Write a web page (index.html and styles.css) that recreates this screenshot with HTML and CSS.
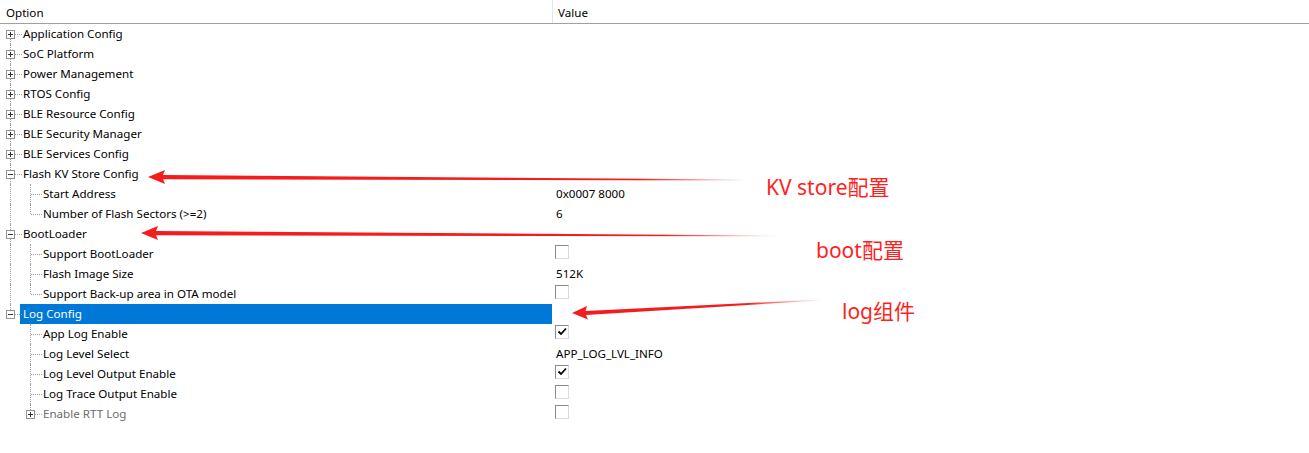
FILE: index.html
```html
<html><head>
<meta name="viewport" content="width=device-width, initial-scale=1">
<link rel="stylesheet" href="styles.css"></head><body>

<div class="page">
  <div class="head">
    <div class="hcol c-opt">Option</div>
    <div class="hcol c-val">Value</div>
  </div>

  <div class="tree">
    <div class="row"><div class="opt"><span class="g vb h"><i class="box plus"></i></span><span class="lbl">Application Config</span></div><div class="val"></div></div>
    <div class="row"><div class="opt"><span class="g v h"><i class="box plus"></i></span><span class="lbl">SoC Platform</span></div><div class="val"></div></div>
    <div class="row"><div class="opt"><span class="g v h"><i class="box plus"></i></span><span class="lbl">Power Management</span></div><div class="val"></div></div>
    <div class="row"><div class="opt"><span class="g v h"><i class="box plus"></i></span><span class="lbl">RTOS Config</span></div><div class="val"></div></div>
    <div class="row"><div class="opt"><span class="g v h"><i class="box plus"></i></span><span class="lbl">BLE Resource Config</span></div><div class="val"></div></div>
    <div class="row"><div class="opt"><span class="g v h"><i class="box plus"></i></span><span class="lbl">BLE Security Manager</span></div><div class="val"></div></div>
    <div class="row"><div class="opt"><span class="g v h"><i class="box plus"></i></span><span class="lbl">BLE Services Config</span></div><div class="val"></div></div>

    <div class="row"><div class="opt"><span class="g v h"><i class="box"></i></span><span class="lbl">Flash KV Store Config</span></div><div class="val"></div></div>
    <div class="row"><div class="opt"><span class="g v"></span><span class="g v h"></span><span class="lbl">Start Address</span></div><div class="val">0x0007 8000</div></div>
    <div class="row"><div class="opt"><span class="g v"></span><span class="g vt h"></span><span class="lbl">Number of Flash Sectors (&gt;=2)</span></div><div class="val">6</div></div>

    <div class="row"><div class="opt"><span class="g v h"><i class="box"></i></span><span class="lbl">BootLoader</span></div><div class="val"></div></div>
    <div class="row"><div class="opt"><span class="g v"></span><span class="g v h"></span><span class="lbl">Support BootLoader</span></div><div class="val"><span class="chk"></span></div></div>
    <div class="row"><div class="opt"><span class="g v"></span><span class="g v h"></span><span class="lbl">Flash Image Size</span></div><div class="val">512K</div></div>
    <div class="row"><div class="opt"><span class="g v"></span><span class="g vt h"></span><span class="lbl">Support Back-up area in OTA model</span></div><div class="val"><span class="chk"></span></div></div>

    <div class="row sel"><div class="opt"><span class="g vt h"><i class="box"></i></span><span class="lbl">Log Config</span></div><div class="val"></div></div>
    <div class="row"><div class="opt"><span class="g"></span><span class="g v h"></span><span class="lbl">App Log Enable</span></div><div class="val"><span class="chk on"><svg width="12" height="12" viewBox="0 0 12 12"><path d="M2.5 5.5 L5 8 L10 2.5" fill="none" stroke="#000" stroke-width="1.8"/></svg></span></div></div>
    <div class="row"><div class="opt"><span class="g"></span><span class="g v h"></span><span class="lbl">Log Level Select</span></div><div class="val">APP_LOG_LVL_INFO</div></div>
    <div class="row"><div class="opt"><span class="g"></span><span class="g v h"></span><span class="lbl">Log Level Output Enable</span></div><div class="val"><span class="chk on"><svg width="12" height="12" viewBox="0 0 12 12"><path d="M2.5 5.5 L5 8 L10 2.5" fill="none" stroke="#000" stroke-width="1.8"/></svg></span></div></div>
    <div class="row"><div class="opt"><span class="g"></span><span class="g v h"></span><span class="lbl">Log Trace Output Enable</span></div><div class="val"><span class="chk"></span></div></div>
    <div class="row off"><div class="opt"><span class="g"></span><span class="g vt h"><i class="box plus"></i></span><span class="lbl">Enable RTT Log</span></div><div class="val"><span class="chk"></span></div></div>
  </div>

  <!-- annotations -->
  <svg class="marks" width="1309" height="453" viewBox="0 0 1309 453">
    <defs>
      <linearGradient id="fade1" gradientUnits="userSpaceOnUse" x1="148" y1="0" x2="748" y2="0">
        <stop offset="0" stop-color="#f41c1c"/>
        <stop offset="0.82" stop-color="#f41c1c"/>
        <stop offset="1" stop-color="#f41c1c" stop-opacity="0"/>
      </linearGradient>
      <linearGradient id="fade2" gradientUnits="userSpaceOnUse" x1="141" y1="0" x2="780" y2="0">
        <stop offset="0" stop-color="#f41c1c"/>
        <stop offset="0.82" stop-color="#f41c1c"/>
        <stop offset="1" stop-color="#f41c1c" stop-opacity="0"/>
      </linearGradient>
      <linearGradient id="fade3" gradientUnits="userSpaceOnUse" x1="572" y1="0" x2="820" y2="0">
        <stop offset="0" stop-color="#f41c1c"/>
        <stop offset="0.7" stop-color="#f41c1c"/>
        <stop offset="1" stop-color="#f41c1c" stop-opacity="0"/>
      </linearGradient>
    </defs>
    <polygon fill="url(#fade1)" points="148,177 165,170 163,175 748,179.6 748,180.4 163,179.2 165,184"/>
    <polygon fill="url(#fade2)" points="141,233 158,226 156,231 780,235.6 780,236.4 156,235.2 158,240"/>
    <polygon fill="url(#fade3)" points="572,313 588,319.5 586,315 820,300.4 820,299.6 585.5,311 587,306"/>
  </svg>
  <div class="note n1">KV store配置</div>
  <div class="note n2">boot配置</div>
  <div class="note n3">log组件</div>
</div>

</body></html>
```

FILE: styles.css
```css
body {margin: 0; background: #fff; font-family: "Noto Sans", "Liberation Sans", sans-serif; font-size: 11.6px; color: #000;}
.page {position: relative; width: 1309px; height: 453px; overflow: hidden;}

.head {display: flex; height: 23px; border-bottom: 1px solid #a0a0a0;}
.hcol {display: flex; align-items: center; height: 100%; box-sizing: border-box; padding-top: 2px;}
.c-opt {width: 553px; padding-left: 6px; border-right: 1px solid #e5e5e5;}
.c-val {padding-left: 5px;}

.row {display: flex; height: 20px;}
.opt {width: 552px; display: flex; flex: none;}
.lbl {flex: 1; padding-left: 3px; line-height: 19px; padding-bottom: 1px; white-space: nowrap;}
.val {padding-left: 4px; line-height: 19px; white-space: nowrap;}
.sel .lbl {background: #0078d7; color: #fff;}
.off .lbl {color: #6d6d6d;}

/* tree guide lines */
.g {position: relative; width: 20px; height: 20px; flex: none;}
.g.v:before, .g.vt:before, .g.vb:before {
  content: "";
  position: absolute;
  left: 10px;
  top: 0;
  bottom: 0;
  border-left: 1px dotted #a0a0a0;
}
.g.vt:before {bottom: 10px;}
.g.vb:before {top: 10px;}
.g.h:after {
  content: "";
  position: absolute;
  left: 11px;
  right: -2px;
  top: 10px;
  border-top: 1px dotted #a0a0a0;
}

.box {
  position: absolute;
  left: 6px;
  top: 6px;
  width: 9px;
  height: 9px;
  box-sizing: border-box;
  border: 1px solid #919191;
  background: #fff;
  z-index: 1;
}
.box:before {content: ""; position: absolute; left: 1px; right: 1px; top: 3px; height: 1px; background: #333;}
.box.plus:after {content: ""; position: absolute; top: 1px; bottom: 1px; left: 3px; width: 1px; background: #333;}

.chk {
  display: block;
  width: 14px;
  height: 14px;
  margin: 1px 0 0 -1px;
  box-sizing: border-box;
  border: 1px solid;
  border-color: #8a8a8a #dadada #dadada #8a8a8a;
  background: #fff;
}
.chk svg {display: block; margin: 0;}

/* annotations */
.marks {position: absolute; left: 0; top: 0; pointer-events: none;}
.note {
  position: absolute;
  font-family: "Noto Sans", "Noto Sans CJK SC", sans-serif;
  font-size: 21px;
  line-height: 24px;
  color: #ff1f1f;
  white-space: nowrap;
}
.n1 {left: 766px; top: 175px;}
.n2 {left: 816px; top: 238px;}
.n3 {left: 842px; top: 299px;}
```
